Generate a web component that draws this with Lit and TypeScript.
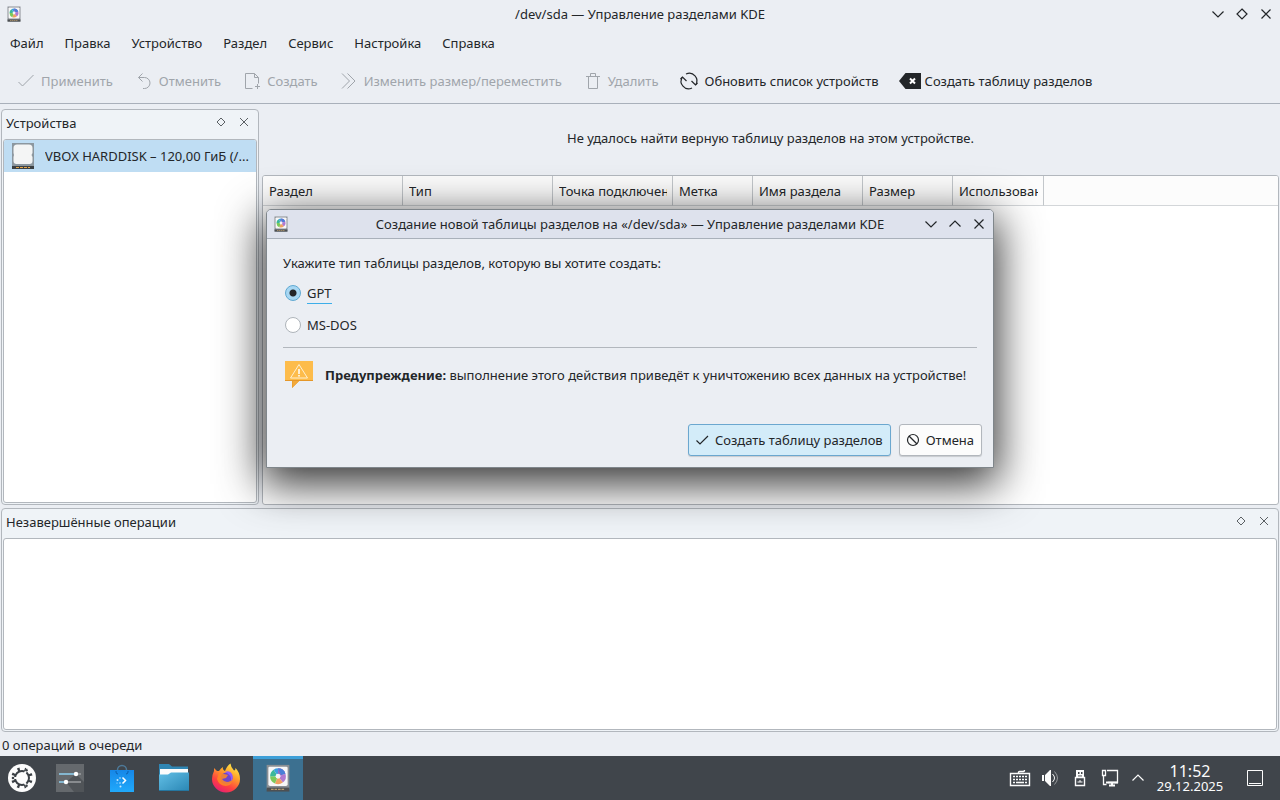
import { LitElement, html, css, svg } from "lit";
import { customElement, property, state } from "lit/decorators.js";
import { classMap } from "lit/directives/class-map.js";

const diskIcon = (size: number) => html`<svg width=${size} height=${size} viewBox="0 0 32 32" aria-hidden="true">
  <path d="M3 1h26v28H3z" fill="#8a8f94" />
  <path d="M6.500 3h19q1.500 0 1.500 1.500v18.500q0 2-2 2H7q-2 0-2-2V4.500Q5 3 6.500 3z" fill="#f7f7f7" />
  <path d="M3 27h26v4.500H3z" fill="#4d5053" />
  <path d="M8 29h16" stroke="#b79a6c" stroke-width="1.500" stroke-dasharray="3 1" />
  <path d="M16 14V5a9 9 0 0 1 8.500 6z" fill="#8f6fc9" />
  <path d="M16 14l8.500-3a9 9 0 0 1-3 10z" fill="#b07ad0" />
  <path d="M16 14l5.500 7a9 9 0 0 1-9 1.300z" fill="#f0a060" />
  <path d="M16 14l-3.500 8.300A9 9 0 0 1 7 14z" fill="#7cc95a" />
  <path d="M16 14H7a9 9 0 0 1 4-7.500z" fill="#3cb89a" />
  <path d="M16 14l-5-7.500A9 9 0 0 1 16 5z" fill="#3d9fe0" />
  <path d="M16 5a9 9 0 0 1 8.500 6l-5 1.500z" fill="#4a7fd8" />
  <circle cx="16" cy="14" r="2.800" fill="#f4f4f6" />
</svg>`;

const stroke = (size: number, body: unknown) => html`<svg width=${size} height=${size}
  viewBox="0 0 ${size} ${size}" fill="none" stroke="currentColor" aria-hidden="true">${body}</svg>`;

const chevronDown = stroke(16, svg`<path d="M2.500 5.500 8 11l5.500-5.500" stroke-width="1.200" />`);
const chevronUp = stroke(16, svg`<path d="M2.500 10.500 8 5l5.500 5.500" stroke-width="1.200" />`);
const diamond = stroke(16, svg`<path d="M8 3l5 5-5 5-5-5z" stroke-width="1.200" />`);
const cross = stroke(16, svg`<path d="M3.500 3.500l9 9M12.500 3.500l-9 9" stroke-width="1.200" />`);

const toolIcons = {
  apply: svg`<path d="M3.500 12l4 4L18.500 5" />`,
  undo: svg`<path d="M5.500 7.500h6a5 5 0 0 1 0 11H10M9.500 3.500l-4 4 4 4" />`,
  create: svg`<path d="M11.500 18.500h-7v-15h9l4 4v6M13.500 3.500v4h4M16.500 14v5M14 16.500h5" />`,
  resize: svg`<path d="M4 3.500l7.500 7.500L4 18.500M9.500 3.500L17 11l-7.500 7.500" />`,
  remove: svg`<path d="M4 6.500h14M6.500 6.500v12h9v-12M8.500 6.500v-3h5v3" />`,
  refresh: svg`<path d="M8 4a7.500 7.500 0 0 1 9.500 11M14 18a7.500 7.500 0 0 1-9.500-11" stroke-width="1.200" /><path d="M13.500 11l4 4 2-2M8.500 11l-4-4-2 2" stroke-width="1.200" />`,
  table: svg`<path d="M0 11l6.500-8H22v16H6.500z" fill="#232629" stroke="none" /><path d="M11 8.500l5 5M16 8.500l-5 5" stroke="#fff" stroke-width="2" />`,
};

@customElement("window-title")
class WindowTitle extends LitElement {
  @property() text = "";
  @property({ type: Boolean }) dialog = false;

  static styles = css`
    :host { display: block; }
    .bar { display: flex; align-items: center; height: 28px; padding: 0 6px; }
    .bar.dialog { background: #dee2ed; border-bottom: 1px solid #a9b0ba; }
    .side { display: flex; flex: 0 0 64px; gap: 8px; }
    .end { justify-content: flex-end; }
    h1 { flex: 1; margin: 0; font-size: 13px; font-weight: 400; text-align: center; white-space: nowrap; }
    button { display: flex; padding: 0; border: 0; background: none; color: #232629; }
  `;

  render() {
    return html`<header class=${classMap({ bar: true, dialog: this.dialog })}>
      <div class="side">${diskIcon(16)}</div>
      <h1>${this.text}</h1>
      <div class="side end">
        <button aria-label="Свернуть">${chevronDown}</button>
        <button aria-label="Развернуть">${this.dialog ? chevronUp : diamond}</button>
        <button aria-label="Закрыть">${cross}</button>
      </div>
    </header>`;
  }
}

@customElement("dock-panel")
class DockPanel extends LitElement {
  @property() heading = "";

  static styles = css`
    :host { display: flex; flex-direction: column; box-sizing: border-box; min-width: 0;
      padding: 0 1px 1px; border: 1px solid #b2b7bd; border-radius: 4px; background: #eff3f7; }
    header { display: flex; align-items: center; box-sizing: border-box; height: 29px; padding: 0 5px 3px 3px; }
    h2 { flex: 1; margin: 0; font-size: 13px; font-weight: 400; white-space: nowrap; }
    .tools { display: flex; gap: 7px; }
    button { display: flex; padding: 0 0 2px; border: 0; background: none; color: #5b6064; }
    .content { flex: 1; min-height: 0; overflow: hidden; border: 1px solid #b2b7bd; border-radius: 3px; background: #fff; }
  `;

  render() {
    return html`<header>
        <h2>${this.heading}</h2>
        <div class="tools">
          <button aria-label="Открепить">${stroke(16, svg`<path d="M8 4l4 4-4 4-4-4z" />`)}</button>
          <button aria-label="Закрыть">${stroke(16, svg`<path d="M4 4l8 8M12 4l-8 8" />`)}</button>
        </div>
      </header>
      <div class="content"><slot></slot></div>`;
  }
}

@customElement("create-table-dialog")
class CreateTableDialog extends LitElement {
  @state() private kind = "gpt";

  static styles = css`
    :host { display: block; box-sizing: border-box; border: 1px solid #7f868b; border-radius: 5px 5px 0 0;
      background: #ebeef3; overflow: hidden; box-shadow: 0 12px 44px 4px rgba(0, 0, 0, 0.8); }
    form { padding: 15px 16px 11px; line-height: 18px; }
    fieldset { margin: 0; padding: 0 0 13px; border: 0; border-bottom: 1px solid #b2b7bd; }
    legend { padding: 0; }
    .option { display: flex; align-items: center; gap: 6px; height: 18px; margin-top: 14px; padding-left: 2px; }
    .option:first-of-type { margin-top: 12px; }
    input { appearance: none; width: 16px; height: 16px; margin: 0; border: 1px solid #aeb4ba; border-radius: 50%; background: #fff; outline: 0; }
    input:checked { border-color: #5fa9d2; background: radial-gradient(circle, #232629 3px, #a7d7f3 4px); }
    label { height: 20px; line-height: 20px; }
    input:checked + label { box-shadow: 0 1px 0 #3daee9; }
    .warning { display: flex; align-items: center; gap: 10px; height: 32px; margin: 11px 0 33px; white-space: nowrap; }
    .warning p { margin: 0; }
    .warning svg { flex: none; }
    .actions { display: flex; justify-content: flex-end; gap: 8px; margin-right: -5px; }
    button { display: flex; align-items: center; gap: 5px; height: 32px; padding: 0 7px 0 5px; font: inherit; color: #232629;
      white-space: nowrap; border: 1px solid #b2b7bd; border-radius: 3px; background: #fcfcfc; box-shadow: 0 1px 1px rgba(0, 0, 0, 0.15); }
    .primary { border-color: #6ba7cf; background: #d3ecf9; }
  `;

  private option(id: string, text: string) {
    return html`<div class="option">
      <input type="radio" name="kind" id=${id} .checked=${this.kind === id} @change=${() => (this.kind = id)} />
      <label for=${id}>${text}</label>
    </div>`;
  }

  render() {
    return html`<window-title dialog text="Создание новой таблицы разделов на «/dev/sda» — Управление разделами KDE"></window-title>
      <form @submit=${(e: Event) => e.preventDefault()}>
        <fieldset>
          <legend>Укажите тип таблицы разделов, которую вы хотите создать:</legend>
          ${this.option("gpt", "GPT")} ${this.option("msdos", "MS-DOS")}
        </fieldset>
        <div class="warning">
          <svg width="32" height="32" viewBox="0 0 32 32" aria-hidden="true">
            <path d="M2 2h28v20H16l-7 7v-7H2z" fill="#fdbc4b" />
            <path d="M2 21h28v1H16l-7 7v-7H2z" fill="#e59728" />
            <path d="M9.500 22h6.500l-6.500 6z" fill="#f2a93a" />
            <path d="M16 5.500l8.500 13.500h-17z" fill="none" stroke="#fff0d0" />
            <path d="M16 10v5M16 16v1.500" stroke="#fff" stroke-width="1.500" />
          </svg>
          <p><b>Предупреждение:</b> выполнение этого действия приведёт к уничтожению всех данных на устройстве!</p>
        </div>
        <div class="actions">
          <button class="primary">${stroke(16, svg`<path d="M2.500 8.500l3.500 3.500 8-8" stroke-width="1.200" />`)}Создать таблицу разделов</button>
          <button type="button">${stroke(16, svg`<circle cx="8" cy="8" r="5.500" stroke-width="1.200" /><path d="M4 4l8 8" stroke-width="1.200" />`)}Отмена</button>
        </div>
      </form>`;
  }
}

@customElement("task-panel")
class TaskPanel extends LitElement {
  static styles = css`
    :host { display: flex; justify-content: space-between; height: 44px; background: #40454b; color: #fcfcfc; }
    .apps, .tray { display: flex; align-items: stretch; }
    button { display: flex; align-items: center; justify-content: center; box-sizing: border-box; padding: 0; border: 0; background: none; color: inherit; font: inherit; }
    .apps button { width: 50px; margin-right: 2px; }
    .apps .launcher { width: 44px; margin-right: 1px; }
    .apps .active { background: #3c7090; box-shadow: inset 0 3px 0 #3d9fd8; }
    .tray button { width: 30px; }
    .tray .expand { width: 26px; }
    .tray .clock { flex-direction: column; width: 78px; }
    .time { font-size: 16px; line-height: 16px; }
    .date { font-size: 13px; line-height: 14px; }
    .tray .desktop { width: 51px; }
  `;

  render() {
    return html`<nav class="apps">
        <button class="launcher" aria-label="Меню">
          <svg width="28" height="28" viewBox="0 0 28 28"><circle cx="14" cy="14" r="14" fill="#fcfcfc" />
            <circle cx="14" cy="14" r="7" fill="none" stroke="#3b4045" stroke-width="2" />
            <circle cx="14" cy="14" r="9" fill="none" stroke="#3b4045" stroke-width="3.500" stroke-dasharray="2.300 4.769" transform="rotate(15 14 14)" />
            <path d="M14 14H3M14 14l5.500-9.500M14 14l5.500 9.500" stroke="#fcfcfc" stroke-width="2" />
            <g fill="#3b4045"><circle cx="5" cy="14" r="1.300" /><circle cx="18.500" cy="6.200" r="1.300" /><circle cx="18.500" cy="21.800" r="1.300" /></g></svg>
        </button>
        <button aria-label="Настройки">
          <svg width="28" height="28" viewBox="0 0 28 28"><path d="M0 0h28v28H0z" fill="#65696d" /><path d="M10 18l10-8 8 8v10H18z" fill="#505458" />
            <path d="M3 10h17M3 18h7" stroke="#8ed0ef" stroke-width="1.500" /><path d="M20 10h5M10 18h15" stroke="#9a9da0" stroke-width="1.500" />
            <circle cx="20" cy="10" r="2.200" fill="#fff" /><circle cx="10" cy="18" r="2.200" fill="#fff" /></svg>
        </button>
        <button aria-label="Центр приложений">
          <svg width="28" height="28" viewBox="0 0 28 28"><defs><linearGradient id="bag" x2="0" y2="1"><stop stop-color="#1687e8" /><stop offset="1" stop-color="#20a9fb" /></linearGradient></defs>
            <path d="M9.500 9V6a4.500 4.500 0 0 1 9 0v3" fill="none" stroke="#4d7998" stroke-width="1.500" /><path d="M2 6h24v22H2z" fill="url(#bag)" />
            <path d="M8 7v1q0 2 2 2M20 7v1q0 2-2 2" fill="none" stroke="#0c5fae" />
            <path d="M14.500 13.500l3 3-3 3" fill="none" stroke="#fff" stroke-width="1.500" />
            <g fill="#c4e6ff"><circle cx="9.500" cy="16" r="1" /><circle cx="12.500" cy="22.500" r="1" /><circle cx="12" cy="14" r="0.800" /><circle cx="12" cy="19" r="0.800" /><circle cx="9" cy="19" r="0.600" /></g></svg>
        </button>
        <button aria-label="Файлы">
          <svg width="32" height="32" viewBox="0 0 32 32"><defs><linearGradient id="dir" x2="1" y2="1"><stop stop-color="#62bfe6" /><stop offset="1" stop-color="#2a86b4" /></linearGradient></defs>
            <path d="M1 2h10l3 2.500h16V14H1z" fill="#2f86b4" /><path d="M2 7h28v8H2z" fill="#fcfcfc" />
            <path d="M1 12.500h9l3-2h18V29H1z" fill="url(#dir)" /><path d="M1 28h30v1H1z" fill="#2576a0" /></svg>
        </button>
        <button aria-label="Firefox">
          <svg width="30" height="30" viewBox="0 0 30 30"><defs><linearGradient id="fox" x1="0.800" y1="0" x2="0.250" y2="1"><stop stop-color="#fff04d" /><stop offset="0.350" stop-color="#ffa32b" /><stop offset="0.700" stop-color="#ff423f" /><stop offset="1" stop-color="#e41c78" /></linearGradient></defs>
            <path d="M14 8q2-5.500 5.500-7.500.3 4 3.500 7 1.500 0 1.500-2.500Q29 9.500 29 16a14 13.500 0 0 1-28 0Q1 12 3 8V5l3 3h2q2-3 4-4-.8 2.500 2 4z" fill="url(#fox)" />
            <circle cx="15.500" cy="15.500" r="6" fill="#7047c9" /><path d="M8 10l5 1 4 1-2 3-4 1q2 3 5 3 4 0 6-4-.2 7-7 8-7 0-9-7z" fill="#ff8a22" opacity="0.850" />
            <path d="M14 9q5-2 7 2 2 4-1 7 1-6-6-9z" fill="#9059ff" /></svg>
        </button>
        <button class="active" aria-label="Управление разделами">${diskIcon(28)}</button>
      </nav>
      <div class="tray">
        <button aria-label="Клавиатура">${stroke(22, svg`<path d="M1.500 6.500h19v12h-19zM9.500 6.500v-1q0-1 1-1h4q1 0 1-1.500" stroke-width="1.400" /><path d="M4 9.500h14M4 12.500h14M4 15.500h2M16 15.500h2" stroke-dasharray="2 1" stroke-width="1.600" /><path d="M7 15.500h8" stroke-width="1.600" />`)}</button>
        <button aria-label="Громкость">${stroke(22, svg`<path d="M3 8h2v6H3zM6 8l5-5h1v16h-1l-5-5z" fill="currentColor" stroke="none" /><path d="M13.500 7q4 4 0 8" /><path d="M15.500 4.500q6 6.500 0 13" opacity="0.450" />`)}</button>
        <button aria-label="Съёмные устройства">${stroke(22, svg`<path d="M7 3h8v8H7z" fill="currentColor" stroke="none" /><path d="M9 5h1.500v2H9zM12 5h1.500v2H12zM9 8.500h4v1H9z" fill="#40454b" stroke="none" /><path d="M6.500 10.500h9v8h-9z" stroke-width="1.400" /><path d="M8.500 15h5M11 13v2" />`)}</button>
        <button aria-label="Сеть">${stroke(22, svg`<path d="M8 3.500h10.500v12H9M3.500 3.500h3v5h-3zM4.500 8.500v9h3" stroke-width="1.300" /><path d="M7 15.500h12M10 18.500h6M13 15v4" stroke-width="2" />`)}</button>
        <button class="expand" aria-label="Показать скрытые значки">${chevronUp}</button>
        <button class="clock"><span class="time">11:52</span><span class="date">29.12.2025</span></button>
        <button class="desktop" aria-label="Свернуть все окна">${stroke(22, svg`<path d="M3.500 3.500h15v15h-15zM5 16.500h12" />`)}</button>
      </div>`;
  }
}

const menus = ["Файл", "Правка", "Устройство", "Раздел", "Сервис", "Настройка", "Справка"];
const tools: { icon: keyof typeof toolIcons; text: string; off?: boolean }[] = [
  { icon: "apply", text: "Применить", off: true },
  { icon: "undo", text: "Отменить", off: true },
  { icon: "create", text: "Создать", off: true },
  { icon: "resize", text: "Изменить размер/переместить", off: true },
  { icon: "remove", text: "Удалить", off: true },
  { icon: "refresh", text: "Обновить список устройств" },
  { icon: "table", text: "Создать таблицу разделов" },
];
const columns = ["Раздел", "Тип", "Точка подключения", "Метка", "Имя раздела", "Размер", "Использовано"];

@customElement("app-root")
class AppRoot extends LitElement {
  static styles = css`
    :host { display: flex; flex-direction: column; position: relative; height: 100vh; overflow: hidden;
      background: #ebeef3; color: #232629; font: 13px/18px "Noto Sans", sans-serif; }
    nav, .toolbar, .tool, .device { display: flex; align-items: center; }
    nav { height: 30px; gap: 21px; padding: 0 10px; }
    nav button, .tool { padding: 0; border: 0; background: none; font: inherit; color: inherit; white-space: nowrap; }
    .toolbar { height: 45px; gap: 20px; padding: 0 15px; border-bottom: 1px solid #a9b0ba; }
    .tool { gap: 4px; }
    .tool:disabled { color: #a0a5ab; }
    .workspace { flex: 1; min-height: 0; display: grid; grid-template-columns: 258px 1fr; gap: 3px; padding: 5px 1px 3px; }
    .partitions { display: flex; flex-direction: column; min-width: 0; }
    .message { height: 66px; margin: 0; line-height: 58px; text-align: center; }
    .grid { flex: 1; border: 1px solid #b2b7bd; border-radius: 3px; background: #fff; overflow: hidden; }
    table { width: 100%; table-layout: fixed; border-collapse: separate; border-spacing: 0; }
    th { box-sizing: border-box; height: 30px; padding: 0 5px 0 6px; overflow: hidden; font-weight: 400; text-align: left; white-space: nowrap;
      border-right: 1px solid #c3c7cb; border-bottom: 1px solid #d3d6d9; background: #fcfcfc; }
    th:last-child { border-right: 0; }
    .c1 { width: 140px; } .c2 { width: 150px; } .c3 { width: 120px; } .c4 { width: 80px; }
    .c5 { width: 110px; } .c6 { width: 90px; } .c7 { width: 91px; }
    .clip { display: block; overflow: hidden; }
    .device { gap: 8px; height: 32px; padding: 0 4px 0 5px; background: #bfddf3; }
    .device svg { flex: none; }
    .device span { overflow: hidden; text-overflow: ellipsis; white-space: nowrap; }
    .pending { flex: none; height: 224px; margin: 0 1px; }
    .status { height: 24px; padding: 0 2px; line-height: 27px; }
    create-table-dialog { position: absolute; left: calc(50% - 374px); top: 209px; width: 728px; }
  `;

  render() {
    return html`
      <window-title text="/dev/sda — Управление разделами KDE"></window-title>
      <nav>${menus.map((m) => html`<button>${m}</button>`)}</nav>
      <div class="toolbar" role="toolbar">
        ${tools.map((t) => html`<button class="tool" ?disabled=${t.off}>${stroke(22, toolIcons[t.icon])}${t.text}</button>`)}
      </div>
      <main class="workspace">
        <dock-panel heading="Устройства">
          <div class="device">
            <svg width="28" height="28" viewBox="0 0 28 28" aria-hidden="true">
              <path d="M3 1h22v26H3z" fill="#8c979f" /><path d="M3 24h22v3H3z" fill="#3c4043" />
              <path d="M8 2.500h12q3.500 0 3.500 3.500v5l-1 2 1 2v4q0 3-3 3h-13q-3 0-3-3v-4l.5-2-.5-2V6q0-3.500 3.500-3.500z" fill="#f4f5f5" />
              <path d="M7 25.500h14" stroke="#e4a64b" stroke-dasharray="3 1" />
            </svg>
            <span>VBOX HARDDISK – 120,00 ГиБ (/...</span>
          </div>
        </dock-panel>
        <section class="partitions">
          <p class="message">Не удалось найти верную таблицу разделов на этом устройстве.</p>
          <div class="grid">
            <table>
              <thead><tr>
                ${columns.map((c, i) => html`<th class="c${i + 1}" scope="col"><span class="clip">${c}</span></th>`)}
                <th></th>
              </tr></thead>
            </table>
          </div>
        </section>
      </main>
      <dock-panel class="pending" heading="Незавершённые операции"></dock-panel>
      <footer class="status">0 операций в очереди</footer>
      <task-panel></task-panel>
      <create-table-dialog role="dialog"></create-table-dialog>
    `;
  }
}
